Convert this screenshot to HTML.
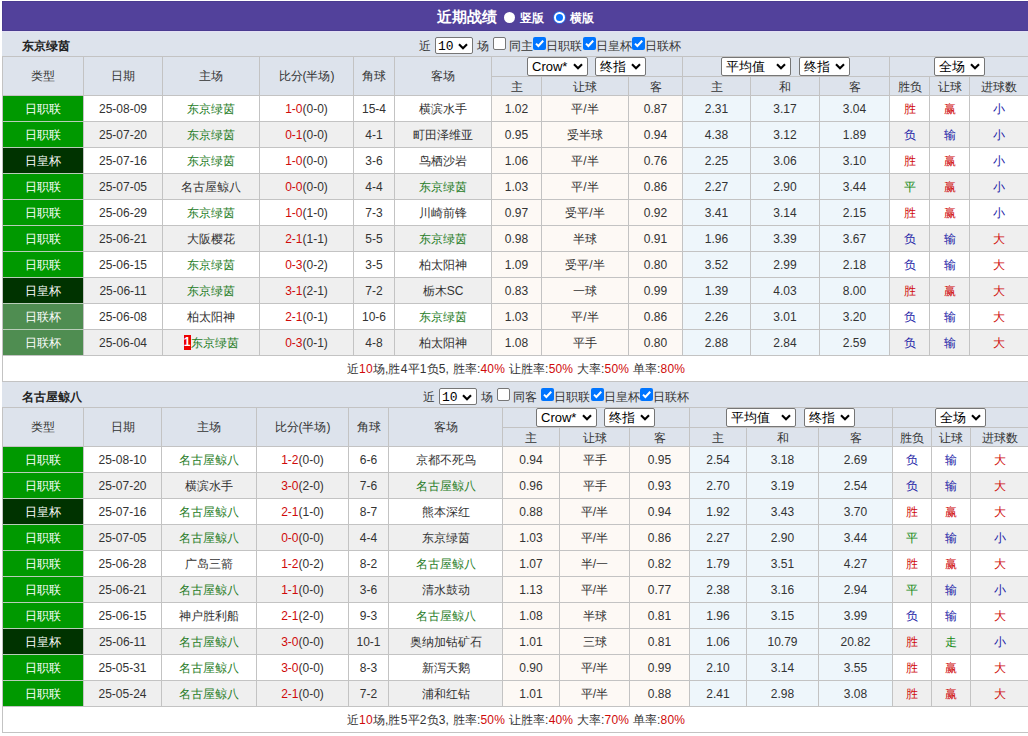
<!DOCTYPE html>
<html><head><meta charset="utf-8"><style>
html,body{margin:0;padding:0;background:#fff;width:1028px;height:736px;overflow:hidden;position:relative}
body div{position:absolute}
body{font-family:"Liberation Sans", sans-serif;font-size:12px;color:#333}
.t{white-space:nowrap}
.sel{background:#fff;border:1px solid #767676;border-radius:2px;color:#000}
.cb{width:11px;height:11px;border:1px solid #767676;border-radius:2px;background:#fff}
.cb.on{width:13px;height:13px;border:0;background:#0075ff}
.rk{display:inline-block;background:#e00;color:#fff;font-weight:bold;width:7px;line-height:14px;height:15px;text-align:center;vertical-align:middle;margin-top:-2px}
</style></head><body>
<div style="left:2px;top:1px;width:1030px;height:30px;background:#52419b;box-sizing:border-box;border:1px solid #4a3c90;"></div><div class="t" style="left:437px;top:8px;height:18px;line-height:18px;font-size:15px;font-weight:bold;color:#fff">近期战绩</div><div style="left:503.5px;top:12px;width:11px;height:11px;border-radius:50%;background:#fff"></div><div class="t" style="left:520px;top:10px;height:16px;line-height:16px;color:#fff;font-size:12px;font-weight:bold">竖版</div><div style="left:553px;top:11px;width:13px;height:13px;border-radius:50%;background:#2a6ee8"><div style="position:absolute;left:1px;top:1px;width:11px;height:11px;border-radius:50%;background:#0a74ff;box-sizing:border-box;border:2px solid #fff"></div></div><div class="t" style="left:570px;top:10px;height:16px;line-height:16px;color:#fff;font-size:12px;font-weight:bold">横版</div><div style="left:2px;top:31px;width:1030px;height:25px;background:#dde3ec;"></div><div style="left:2px;top:31px;width:1030px;height:1px;background:#e4e0f4;"></div><div class="t" style="left:22px;top:39px;height:14px;line-height:14px;font-weight:bold;color:#222">东京绿茵</div><div class="t" style="left:419px;top:38px;height:16px;line-height:16px;color:#333">近</div><div class="sel" style="left:435px;top:37px;width:36px;height:15px;"><span style="position:absolute;left:2px;top:0;line-height:15px;font-size:13px"><span style="font-family:Liberation Mono">10</span></span><svg width="10" height="7" viewBox="0 0 10 7" style="position:absolute;right:4px;top:5px"><path d="M1 1.2 L5 5.2 L9 1.2" fill="none" stroke="#000" stroke-width="2.1"/></svg></div><div class="t" style="left:477px;top:38px;height:16px;line-height:16px;color:#333">场</div><div class="cb" style="left:493px;top:37px"></div><div class="t" style="left:509px;top:38px;height:16px;line-height:16px;color:#333">同主</div><div class="cb on" style="left:533px;top:37px"><svg width="13" height="13" viewBox="0 0 13 13" style="position:absolute;left:0;top:0"><path d="M3 6.6 L5.4 9 L10.2 3.8" fill="none" stroke="#fff" stroke-width="2"/></svg></div><div class="t" style="left:546px;top:38px;height:16px;line-height:16px;color:#333">日职联</div><div class="cb on" style="left:582.5px;top:37px"><svg width="13" height="13" viewBox="0 0 13 13" style="position:absolute;left:0;top:0"><path d="M3 6.6 L5.4 9 L10.2 3.8" fill="none" stroke="#fff" stroke-width="2"/></svg></div><div class="t" style="left:595.5px;top:38px;height:16px;line-height:16px;color:#333">日皇杯</div><div class="cb on" style="left:632.0px;top:37px"><svg width="13" height="13" viewBox="0 0 13 13" style="position:absolute;left:0;top:0"><path d="M3 6.6 L5.4 9 L10.2 3.8" fill="none" stroke="#fff" stroke-width="2"/></svg></div><div class="t" style="left:645.0px;top:38px;height:16px;line-height:16px;color:#333">日联杯</div><div style="left:2px;top:56px;width:1030px;height:39px;background:#dde3ec;"></div><div style="left:2px;top:96px;width:1030px;height:25px;background:#ffffff;"></div><div style="left:492px;top:96px;width:190px;height:25px;background:#fdf9f5;"></div><div style="left:683px;top:96px;width:206px;height:25px;background:#eef6fb;"></div><div style="left:2px;top:122px;width:1030px;height:25px;background:#efefef;"></div><div style="left:492px;top:122px;width:190px;height:25px;background:#fdf9f5;"></div><div style="left:683px;top:122px;width:206px;height:25px;background:#eef6fb;"></div><div style="left:2px;top:148px;width:1030px;height:25px;background:#ffffff;"></div><div style="left:492px;top:148px;width:190px;height:25px;background:#fdf9f5;"></div><div style="left:683px;top:148px;width:206px;height:25px;background:#eef6fb;"></div><div style="left:2px;top:174px;width:1030px;height:25px;background:#efefef;"></div><div style="left:492px;top:174px;width:190px;height:25px;background:#fdf9f5;"></div><div style="left:683px;top:174px;width:206px;height:25px;background:#eef6fb;"></div><div style="left:2px;top:200px;width:1030px;height:25px;background:#ffffff;"></div><div style="left:492px;top:200px;width:190px;height:25px;background:#fdf9f5;"></div><div style="left:683px;top:200px;width:206px;height:25px;background:#eef6fb;"></div><div style="left:2px;top:226px;width:1030px;height:25px;background:#efefef;"></div><div style="left:492px;top:226px;width:190px;height:25px;background:#fdf9f5;"></div><div style="left:683px;top:226px;width:206px;height:25px;background:#eef6fb;"></div><div style="left:2px;top:252px;width:1030px;height:25px;background:#ffffff;"></div><div style="left:492px;top:252px;width:190px;height:25px;background:#fdf9f5;"></div><div style="left:683px;top:252px;width:206px;height:25px;background:#eef6fb;"></div><div style="left:2px;top:278px;width:1030px;height:25px;background:#efefef;"></div><div style="left:492px;top:278px;width:190px;height:25px;background:#fdf9f5;"></div><div style="left:683px;top:278px;width:206px;height:25px;background:#eef6fb;"></div><div style="left:2px;top:304px;width:1030px;height:25px;background:#ffffff;"></div><div style="left:492px;top:304px;width:190px;height:25px;background:#fdf9f5;"></div><div style="left:683px;top:304px;width:206px;height:25px;background:#eef6fb;"></div><div style="left:2px;top:330px;width:1030px;height:25px;background:#efefef;"></div><div style="left:492px;top:330px;width:190px;height:25px;background:#fdf9f5;"></div><div style="left:683px;top:330px;width:206px;height:25px;background:#eef6fb;"></div><div style="left:2px;top:356px;width:1030px;height:25px;background:#fff;"></div><div style="left:2px;top:56px;width:1028px;height:1px;background:#c3c3c3;"></div><div style="left:491px;top:76px;width:539px;height:1px;background:#c3c3c3;"></div><div style="left:2px;top:95px;width:1028px;height:1px;background:#c3c3c3;"></div><div style="left:2px;top:121px;width:1028px;height:1px;background:#c3c3c3;"></div><div style="left:2px;top:147px;width:1028px;height:1px;background:#c3c3c3;"></div><div style="left:2px;top:173px;width:1028px;height:1px;background:#c3c3c3;"></div><div style="left:2px;top:199px;width:1028px;height:1px;background:#c3c3c3;"></div><div style="left:2px;top:225px;width:1028px;height:1px;background:#c3c3c3;"></div><div style="left:2px;top:251px;width:1028px;height:1px;background:#c3c3c3;"></div><div style="left:2px;top:277px;width:1028px;height:1px;background:#c3c3c3;"></div><div style="left:2px;top:303px;width:1028px;height:1px;background:#c3c3c3;"></div><div style="left:2px;top:329px;width:1028px;height:1px;background:#c3c3c3;"></div><div style="left:2px;top:355px;width:1028px;height:1px;background:#c3c3c3;"></div><div style="left:2px;top:381px;width:1028px;height:1px;background:#c3c3c3;"></div><div style="left:2px;top:56px;width:1px;height:326px;background:#c3c3c3;"></div><div style="left:83px;top:56px;width:1px;height:299px;background:#c3c3c3;"></div><div style="left:162px;top:56px;width:1px;height:299px;background:#c3c3c3;"></div><div style="left:259px;top:56px;width:1px;height:299px;background:#c3c3c3;"></div><div style="left:353px;top:56px;width:1px;height:299px;background:#c3c3c3;"></div><div style="left:394px;top:56px;width:1px;height:299px;background:#c3c3c3;"></div><div style="left:491px;top:56px;width:1px;height:299px;background:#c3c3c3;"></div><div style="left:541px;top:76px;width:1px;height:279px;background:#c3c3c3;"></div><div style="left:628px;top:76px;width:1px;height:279px;background:#c3c3c3;"></div><div style="left:682px;top:56px;width:1px;height:299px;background:#c3c3c3;"></div><div style="left:750px;top:76px;width:1px;height:279px;background:#c3c3c3;"></div><div style="left:819px;top:76px;width:1px;height:279px;background:#c3c3c3;"></div><div style="left:889px;top:56px;width:1px;height:299px;background:#c3c3c3;"></div><div style="left:929px;top:76px;width:1px;height:279px;background:#c3c3c3;"></div><div style="left:969px;top:76px;width:1px;height:279px;background:#c3c3c3;"></div><div style="left:1028px;top:56px;width:1px;height:299px;background:#c3c3c3;"></div><div class="t" style="left:3px;top:57px;width:80px;height:38px;line-height:38px;text-align:center;color:#333">类型</div><div class="t" style="left:84px;top:57px;width:78px;height:38px;line-height:38px;text-align:center;color:#333">日期</div><div class="t" style="left:163px;top:57px;width:96px;height:38px;line-height:38px;text-align:center;color:#333">主场</div><div class="t" style="left:260px;top:57px;width:93px;height:38px;line-height:38px;text-align:center;color:#333">比分(半场)</div><div class="t" style="left:354px;top:57px;width:40px;height:38px;line-height:38px;text-align:center;color:#333">角球</div><div class="t" style="left:395px;top:57px;width:96px;height:38px;line-height:38px;text-align:center;color:#333">客场</div><div class="t" style="left:492px;top:78px;width:49px;height:18px;line-height:18px;text-align:center;color:#333">主</div><div class="t" style="left:542px;top:78px;width:86px;height:18px;line-height:18px;text-align:center;color:#333">让球</div><div class="t" style="left:629px;top:78px;width:53px;height:18px;line-height:18px;text-align:center;color:#333">客</div><div class="t" style="left:683px;top:78px;width:67px;height:18px;line-height:18px;text-align:center;color:#333">主</div><div class="t" style="left:751px;top:78px;width:68px;height:18px;line-height:18px;text-align:center;color:#333">和</div><div class="t" style="left:820px;top:78px;width:69px;height:18px;line-height:18px;text-align:center;color:#333">客</div><div class="t" style="left:890px;top:78px;width:39px;height:18px;line-height:18px;text-align:center;color:#333">胜负</div><div class="t" style="left:930px;top:78px;width:39px;height:18px;line-height:18px;text-align:center;color:#333">让球</div><div class="t" style="left:970px;top:78px;width:58px;height:18px;line-height:18px;text-align:center;color:#333">进球数</div><div class="sel" style="left:527px;top:57px;width:59px;height:17px;"><span style="position:absolute;left:4px;top:0;line-height:17px;font-size:13px">Crow*</span><svg width="10" height="7" viewBox="0 0 10 7" style="position:absolute;right:4px;top:5px"><path d="M1 1.2 L5 5.2 L9 1.2" fill="none" stroke="#000" stroke-width="2.1"/></svg></div><div class="sel" style="left:595px;top:57px;width:49px;height:17px;"><span style="position:absolute;left:4px;top:0;line-height:17px;font-size:13px">终指</span><svg width="10" height="7" viewBox="0 0 10 7" style="position:absolute;right:4px;top:5px"><path d="M1 1.2 L5 5.2 L9 1.2" fill="none" stroke="#000" stroke-width="2.1"/></svg></div><div class="sel" style="left:721px;top:57px;width:68px;height:17px;"><span style="position:absolute;left:4px;top:0;line-height:17px;font-size:13px">平均值</span><svg width="10" height="7" viewBox="0 0 10 7" style="position:absolute;right:4px;top:5px"><path d="M1 1.2 L5 5.2 L9 1.2" fill="none" stroke="#000" stroke-width="2.1"/></svg></div><div class="sel" style="left:799px;top:57px;width:49px;height:17px;"><span style="position:absolute;left:4px;top:0;line-height:17px;font-size:13px">终指</span><svg width="10" height="7" viewBox="0 0 10 7" style="position:absolute;right:4px;top:5px"><path d="M1 1.2 L5 5.2 L9 1.2" fill="none" stroke="#000" stroke-width="2.1"/></svg></div><div class="sel" style="left:934px;top:57px;width:49px;height:17px;"><span style="position:absolute;left:4px;top:0;line-height:17px;font-size:13px">全场</span><svg width="10" height="7" viewBox="0 0 10 7" style="position:absolute;right:4px;top:5px"><path d="M1 1.2 L5 5.2 L9 1.2" fill="none" stroke="#000" stroke-width="2.1"/></svg></div><div style="left:3px;top:96px;width:80px;height:25px;background:#009900;"></div><div class="t" style="left:3px;top:97px;width:80px;height:25px;line-height:25px;text-align:center;color:#fff">日职联</div><div class="t" style="left:84px;top:97px;width:78px;height:25px;line-height:25px;text-align:center;color:#333">25-08-09</div><div class="t" style="left:163px;top:97px;width:96px;height:25px;line-height:25px;text-align:center;color:#333"><span style="color:#267c26">东京绿茵</span></div><div class="t" style="left:260px;top:97px;width:93px;height:25px;line-height:25px;text-align:center;color:#333"><span style="color:#cf0a0a">1-0</span>(0-0)</div><div class="t" style="left:354px;top:97px;width:40px;height:25px;line-height:25px;text-align:center;color:#333">15-4</div><div class="t" style="left:395px;top:97px;width:96px;height:25px;line-height:25px;text-align:center;color:#333">横滨水手</div><div class="t" style="left:492px;top:97px;width:49px;height:25px;line-height:25px;text-align:center;color:#333">1.02</div><div class="t" style="left:542px;top:97px;width:86px;height:25px;line-height:25px;text-align:center;color:#333">平/半</div><div class="t" style="left:629px;top:97px;width:53px;height:25px;line-height:25px;text-align:center;color:#333">0.87</div><div class="t" style="left:683px;top:97px;width:67px;height:25px;line-height:25px;text-align:center;color:#333">2.31</div><div class="t" style="left:751px;top:97px;width:68px;height:25px;line-height:25px;text-align:center;color:#333">3.17</div><div class="t" style="left:820px;top:97px;width:69px;height:25px;line-height:25px;text-align:center;color:#333">3.04</div><div class="t" style="left:890px;top:97px;width:39px;height:25px;line-height:25px;text-align:center;color:#333"><span style="color:#cf0a0a">胜</span></div><div class="t" style="left:930px;top:97px;width:39px;height:25px;line-height:25px;text-align:center;color:#333"><span style="color:#cf0a0a">赢</span></div><div class="t" style="left:970px;top:97px;width:58px;height:25px;line-height:25px;text-align:center;color:#333"><span style="color:#1a1aa6">小</span></div><div style="left:3px;top:121px;width:80px;height:26px;background:#009900;"></div><div style="left:3px;top:121px;width:80px;height:1px;background:#b9cdb9;"></div><div class="t" style="left:3px;top:123px;width:80px;height:25px;line-height:25px;text-align:center;color:#fff">日职联</div><div class="t" style="left:84px;top:123px;width:78px;height:25px;line-height:25px;text-align:center;color:#333">25-07-20</div><div class="t" style="left:163px;top:123px;width:96px;height:25px;line-height:25px;text-align:center;color:#333"><span style="color:#267c26">东京绿茵</span></div><div class="t" style="left:260px;top:123px;width:93px;height:25px;line-height:25px;text-align:center;color:#333"><span style="color:#cf0a0a">0-1</span>(0-0)</div><div class="t" style="left:354px;top:123px;width:40px;height:25px;line-height:25px;text-align:center;color:#333">4-1</div><div class="t" style="left:395px;top:123px;width:96px;height:25px;line-height:25px;text-align:center;color:#333">町田泽维亚</div><div class="t" style="left:492px;top:123px;width:49px;height:25px;line-height:25px;text-align:center;color:#333">0.95</div><div class="t" style="left:542px;top:123px;width:86px;height:25px;line-height:25px;text-align:center;color:#333">受半球</div><div class="t" style="left:629px;top:123px;width:53px;height:25px;line-height:25px;text-align:center;color:#333">0.94</div><div class="t" style="left:683px;top:123px;width:67px;height:25px;line-height:25px;text-align:center;color:#333">4.38</div><div class="t" style="left:751px;top:123px;width:68px;height:25px;line-height:25px;text-align:center;color:#333">3.12</div><div class="t" style="left:820px;top:123px;width:69px;height:25px;line-height:25px;text-align:center;color:#333">1.89</div><div class="t" style="left:890px;top:123px;width:39px;height:25px;line-height:25px;text-align:center;color:#333"><span style="color:#1a1aa6">负</span></div><div class="t" style="left:930px;top:123px;width:39px;height:25px;line-height:25px;text-align:center;color:#333"><span style="color:#1a1aa6">输</span></div><div class="t" style="left:970px;top:123px;width:58px;height:25px;line-height:25px;text-align:center;color:#333"><span style="color:#1a1aa6">小</span></div><div style="left:3px;top:147px;width:80px;height:26px;background:#003300;"></div><div style="left:3px;top:147px;width:80px;height:1px;background:#b9cdb9;"></div><div class="t" style="left:3px;top:149px;width:80px;height:25px;line-height:25px;text-align:center;color:#fff">日皇杯</div><div class="t" style="left:84px;top:149px;width:78px;height:25px;line-height:25px;text-align:center;color:#333">25-07-16</div><div class="t" style="left:163px;top:149px;width:96px;height:25px;line-height:25px;text-align:center;color:#333"><span style="color:#267c26">东京绿茵</span></div><div class="t" style="left:260px;top:149px;width:93px;height:25px;line-height:25px;text-align:center;color:#333"><span style="color:#cf0a0a">1-0</span>(0-0)</div><div class="t" style="left:354px;top:149px;width:40px;height:25px;line-height:25px;text-align:center;color:#333">3-6</div><div class="t" style="left:395px;top:149px;width:96px;height:25px;line-height:25px;text-align:center;color:#333">鸟栖沙岩</div><div class="t" style="left:492px;top:149px;width:49px;height:25px;line-height:25px;text-align:center;color:#333">1.06</div><div class="t" style="left:542px;top:149px;width:86px;height:25px;line-height:25px;text-align:center;color:#333">平/半</div><div class="t" style="left:629px;top:149px;width:53px;height:25px;line-height:25px;text-align:center;color:#333">0.76</div><div class="t" style="left:683px;top:149px;width:67px;height:25px;line-height:25px;text-align:center;color:#333">2.25</div><div class="t" style="left:751px;top:149px;width:68px;height:25px;line-height:25px;text-align:center;color:#333">3.06</div><div class="t" style="left:820px;top:149px;width:69px;height:25px;line-height:25px;text-align:center;color:#333">3.10</div><div class="t" style="left:890px;top:149px;width:39px;height:25px;line-height:25px;text-align:center;color:#333"><span style="color:#cf0a0a">胜</span></div><div class="t" style="left:930px;top:149px;width:39px;height:25px;line-height:25px;text-align:center;color:#333"><span style="color:#cf0a0a">赢</span></div><div class="t" style="left:970px;top:149px;width:58px;height:25px;line-height:25px;text-align:center;color:#333"><span style="color:#1a1aa6">小</span></div><div style="left:3px;top:173px;width:80px;height:26px;background:#009900;"></div><div style="left:3px;top:173px;width:80px;height:1px;background:#b9cdb9;"></div><div class="t" style="left:3px;top:175px;width:80px;height:25px;line-height:25px;text-align:center;color:#fff">日职联</div><div class="t" style="left:84px;top:175px;width:78px;height:25px;line-height:25px;text-align:center;color:#333">25-07-05</div><div class="t" style="left:163px;top:175px;width:96px;height:25px;line-height:25px;text-align:center;color:#333">名古屋鲸八</div><div class="t" style="left:260px;top:175px;width:93px;height:25px;line-height:25px;text-align:center;color:#333"><span style="color:#cf0a0a">0-0</span>(0-0)</div><div class="t" style="left:354px;top:175px;width:40px;height:25px;line-height:25px;text-align:center;color:#333">4-4</div><div class="t" style="left:395px;top:175px;width:96px;height:25px;line-height:25px;text-align:center;color:#333"><span style="color:#267c26">东京绿茵</span></div><div class="t" style="left:492px;top:175px;width:49px;height:25px;line-height:25px;text-align:center;color:#333">1.03</div><div class="t" style="left:542px;top:175px;width:86px;height:25px;line-height:25px;text-align:center;color:#333">平/半</div><div class="t" style="left:629px;top:175px;width:53px;height:25px;line-height:25px;text-align:center;color:#333">0.86</div><div class="t" style="left:683px;top:175px;width:67px;height:25px;line-height:25px;text-align:center;color:#333">2.27</div><div class="t" style="left:751px;top:175px;width:68px;height:25px;line-height:25px;text-align:center;color:#333">2.90</div><div class="t" style="left:820px;top:175px;width:69px;height:25px;line-height:25px;text-align:center;color:#333">3.44</div><div class="t" style="left:890px;top:175px;width:39px;height:25px;line-height:25px;text-align:center;color:#333"><span style="color:#118811">平</span></div><div class="t" style="left:930px;top:175px;width:39px;height:25px;line-height:25px;text-align:center;color:#333"><span style="color:#cf0a0a">赢</span></div><div class="t" style="left:970px;top:175px;width:58px;height:25px;line-height:25px;text-align:center;color:#333"><span style="color:#1a1aa6">小</span></div><div style="left:3px;top:199px;width:80px;height:26px;background:#009900;"></div><div style="left:3px;top:199px;width:80px;height:1px;background:#b9cdb9;"></div><div class="t" style="left:3px;top:201px;width:80px;height:25px;line-height:25px;text-align:center;color:#fff">日职联</div><div class="t" style="left:84px;top:201px;width:78px;height:25px;line-height:25px;text-align:center;color:#333">25-06-29</div><div class="t" style="left:163px;top:201px;width:96px;height:25px;line-height:25px;text-align:center;color:#333"><span style="color:#267c26">东京绿茵</span></div><div class="t" style="left:260px;top:201px;width:93px;height:25px;line-height:25px;text-align:center;color:#333"><span style="color:#cf0a0a">1-0</span>(1-0)</div><div class="t" style="left:354px;top:201px;width:40px;height:25px;line-height:25px;text-align:center;color:#333">7-3</div><div class="t" style="left:395px;top:201px;width:96px;height:25px;line-height:25px;text-align:center;color:#333">川崎前锋</div><div class="t" style="left:492px;top:201px;width:49px;height:25px;line-height:25px;text-align:center;color:#333">0.97</div><div class="t" style="left:542px;top:201px;width:86px;height:25px;line-height:25px;text-align:center;color:#333">受平/半</div><div class="t" style="left:629px;top:201px;width:53px;height:25px;line-height:25px;text-align:center;color:#333">0.92</div><div class="t" style="left:683px;top:201px;width:67px;height:25px;line-height:25px;text-align:center;color:#333">3.41</div><div class="t" style="left:751px;top:201px;width:68px;height:25px;line-height:25px;text-align:center;color:#333">3.14</div><div class="t" style="left:820px;top:201px;width:69px;height:25px;line-height:25px;text-align:center;color:#333">2.15</div><div class="t" style="left:890px;top:201px;width:39px;height:25px;line-height:25px;text-align:center;color:#333"><span style="color:#cf0a0a">胜</span></div><div class="t" style="left:930px;top:201px;width:39px;height:25px;line-height:25px;text-align:center;color:#333"><span style="color:#cf0a0a">赢</span></div><div class="t" style="left:970px;top:201px;width:58px;height:25px;line-height:25px;text-align:center;color:#333"><span style="color:#1a1aa6">小</span></div><div style="left:3px;top:225px;width:80px;height:26px;background:#009900;"></div><div style="left:3px;top:225px;width:80px;height:1px;background:#b9cdb9;"></div><div class="t" style="left:3px;top:227px;width:80px;height:25px;line-height:25px;text-align:center;color:#fff">日职联</div><div class="t" style="left:84px;top:227px;width:78px;height:25px;line-height:25px;text-align:center;color:#333">25-06-21</div><div class="t" style="left:163px;top:227px;width:96px;height:25px;line-height:25px;text-align:center;color:#333">大阪樱花</div><div class="t" style="left:260px;top:227px;width:93px;height:25px;line-height:25px;text-align:center;color:#333"><span style="color:#cf0a0a">2-1</span>(1-1)</div><div class="t" style="left:354px;top:227px;width:40px;height:25px;line-height:25px;text-align:center;color:#333">5-5</div><div class="t" style="left:395px;top:227px;width:96px;height:25px;line-height:25px;text-align:center;color:#333"><span style="color:#267c26">东京绿茵</span></div><div class="t" style="left:492px;top:227px;width:49px;height:25px;line-height:25px;text-align:center;color:#333">0.98</div><div class="t" style="left:542px;top:227px;width:86px;height:25px;line-height:25px;text-align:center;color:#333">半球</div><div class="t" style="left:629px;top:227px;width:53px;height:25px;line-height:25px;text-align:center;color:#333">0.91</div><div class="t" style="left:683px;top:227px;width:67px;height:25px;line-height:25px;text-align:center;color:#333">1.96</div><div class="t" style="left:751px;top:227px;width:68px;height:25px;line-height:25px;text-align:center;color:#333">3.39</div><div class="t" style="left:820px;top:227px;width:69px;height:25px;line-height:25px;text-align:center;color:#333">3.67</div><div class="t" style="left:890px;top:227px;width:39px;height:25px;line-height:25px;text-align:center;color:#333"><span style="color:#1a1aa6">负</span></div><div class="t" style="left:930px;top:227px;width:39px;height:25px;line-height:25px;text-align:center;color:#333"><span style="color:#1a1aa6">输</span></div><div class="t" style="left:970px;top:227px;width:58px;height:25px;line-height:25px;text-align:center;color:#333"><span style="color:#cf0a0a">大</span></div><div style="left:3px;top:251px;width:80px;height:26px;background:#009900;"></div><div style="left:3px;top:251px;width:80px;height:1px;background:#b9cdb9;"></div><div class="t" style="left:3px;top:253px;width:80px;height:25px;line-height:25px;text-align:center;color:#fff">日职联</div><div class="t" style="left:84px;top:253px;width:78px;height:25px;line-height:25px;text-align:center;color:#333">25-06-15</div><div class="t" style="left:163px;top:253px;width:96px;height:25px;line-height:25px;text-align:center;color:#333"><span style="color:#267c26">东京绿茵</span></div><div class="t" style="left:260px;top:253px;width:93px;height:25px;line-height:25px;text-align:center;color:#333"><span style="color:#cf0a0a">0-3</span>(0-2)</div><div class="t" style="left:354px;top:253px;width:40px;height:25px;line-height:25px;text-align:center;color:#333">3-5</div><div class="t" style="left:395px;top:253px;width:96px;height:25px;line-height:25px;text-align:center;color:#333">柏太阳神</div><div class="t" style="left:492px;top:253px;width:49px;height:25px;line-height:25px;text-align:center;color:#333">1.09</div><div class="t" style="left:542px;top:253px;width:86px;height:25px;line-height:25px;text-align:center;color:#333">受平/半</div><div class="t" style="left:629px;top:253px;width:53px;height:25px;line-height:25px;text-align:center;color:#333">0.80</div><div class="t" style="left:683px;top:253px;width:67px;height:25px;line-height:25px;text-align:center;color:#333">3.52</div><div class="t" style="left:751px;top:253px;width:68px;height:25px;line-height:25px;text-align:center;color:#333">2.99</div><div class="t" style="left:820px;top:253px;width:69px;height:25px;line-height:25px;text-align:center;color:#333">2.18</div><div class="t" style="left:890px;top:253px;width:39px;height:25px;line-height:25px;text-align:center;color:#333"><span style="color:#1a1aa6">负</span></div><div class="t" style="left:930px;top:253px;width:39px;height:25px;line-height:25px;text-align:center;color:#333"><span style="color:#1a1aa6">输</span></div><div class="t" style="left:970px;top:253px;width:58px;height:25px;line-height:25px;text-align:center;color:#333"><span style="color:#cf0a0a">大</span></div><div style="left:3px;top:277px;width:80px;height:26px;background:#003300;"></div><div style="left:3px;top:277px;width:80px;height:1px;background:#b9cdb9;"></div><div class="t" style="left:3px;top:279px;width:80px;height:25px;line-height:25px;text-align:center;color:#fff">日皇杯</div><div class="t" style="left:84px;top:279px;width:78px;height:25px;line-height:25px;text-align:center;color:#333">25-06-11</div><div class="t" style="left:163px;top:279px;width:96px;height:25px;line-height:25px;text-align:center;color:#333"><span style="color:#267c26">东京绿茵</span></div><div class="t" style="left:260px;top:279px;width:93px;height:25px;line-height:25px;text-align:center;color:#333"><span style="color:#cf0a0a">3-1</span>(2-1)</div><div class="t" style="left:354px;top:279px;width:40px;height:25px;line-height:25px;text-align:center;color:#333">7-2</div><div class="t" style="left:395px;top:279px;width:96px;height:25px;line-height:25px;text-align:center;color:#333">栃木SC</div><div class="t" style="left:492px;top:279px;width:49px;height:25px;line-height:25px;text-align:center;color:#333">0.83</div><div class="t" style="left:542px;top:279px;width:86px;height:25px;line-height:25px;text-align:center;color:#333">一球</div><div class="t" style="left:629px;top:279px;width:53px;height:25px;line-height:25px;text-align:center;color:#333">0.99</div><div class="t" style="left:683px;top:279px;width:67px;height:25px;line-height:25px;text-align:center;color:#333">1.39</div><div class="t" style="left:751px;top:279px;width:68px;height:25px;line-height:25px;text-align:center;color:#333">4.03</div><div class="t" style="left:820px;top:279px;width:69px;height:25px;line-height:25px;text-align:center;color:#333">8.00</div><div class="t" style="left:890px;top:279px;width:39px;height:25px;line-height:25px;text-align:center;color:#333"><span style="color:#cf0a0a">胜</span></div><div class="t" style="left:930px;top:279px;width:39px;height:25px;line-height:25px;text-align:center;color:#333"><span style="color:#cf0a0a">赢</span></div><div class="t" style="left:970px;top:279px;width:58px;height:25px;line-height:25px;text-align:center;color:#333"><span style="color:#cf0a0a">大</span></div><div style="left:3px;top:303px;width:80px;height:26px;background:#4f8d51;"></div><div style="left:3px;top:303px;width:80px;height:1px;background:#b9cdb9;"></div><div class="t" style="left:3px;top:305px;width:80px;height:25px;line-height:25px;text-align:center;color:#fff">日联杯</div><div class="t" style="left:84px;top:305px;width:78px;height:25px;line-height:25px;text-align:center;color:#333">25-06-08</div><div class="t" style="left:163px;top:305px;width:96px;height:25px;line-height:25px;text-align:center;color:#333">柏太阳神</div><div class="t" style="left:260px;top:305px;width:93px;height:25px;line-height:25px;text-align:center;color:#333"><span style="color:#cf0a0a">2-1</span>(0-1)</div><div class="t" style="left:354px;top:305px;width:40px;height:25px;line-height:25px;text-align:center;color:#333">10-6</div><div class="t" style="left:395px;top:305px;width:96px;height:25px;line-height:25px;text-align:center;color:#333"><span style="color:#267c26">东京绿茵</span></div><div class="t" style="left:492px;top:305px;width:49px;height:25px;line-height:25px;text-align:center;color:#333">1.03</div><div class="t" style="left:542px;top:305px;width:86px;height:25px;line-height:25px;text-align:center;color:#333">平/半</div><div class="t" style="left:629px;top:305px;width:53px;height:25px;line-height:25px;text-align:center;color:#333">0.86</div><div class="t" style="left:683px;top:305px;width:67px;height:25px;line-height:25px;text-align:center;color:#333">2.26</div><div class="t" style="left:751px;top:305px;width:68px;height:25px;line-height:25px;text-align:center;color:#333">3.01</div><div class="t" style="left:820px;top:305px;width:69px;height:25px;line-height:25px;text-align:center;color:#333">3.20</div><div class="t" style="left:890px;top:305px;width:39px;height:25px;line-height:25px;text-align:center;color:#333"><span style="color:#1a1aa6">负</span></div><div class="t" style="left:930px;top:305px;width:39px;height:25px;line-height:25px;text-align:center;color:#333"><span style="color:#1a1aa6">输</span></div><div class="t" style="left:970px;top:305px;width:58px;height:25px;line-height:25px;text-align:center;color:#333"><span style="color:#cf0a0a">大</span></div><div style="left:3px;top:329px;width:80px;height:26px;background:#4f8d51;"></div><div style="left:3px;top:329px;width:80px;height:1px;background:#b9cdb9;"></div><div class="t" style="left:3px;top:331px;width:80px;height:25px;line-height:25px;text-align:center;color:#fff">日联杯</div><div class="t" style="left:84px;top:331px;width:78px;height:25px;line-height:25px;text-align:center;color:#333">25-06-04</div><div class="t" style="left:163px;top:331px;width:96px;height:25px;line-height:25px;text-align:center;color:#333"><span class="rk">1</span><span style="color:#267c26">东京绿茵</span></div><div class="t" style="left:260px;top:331px;width:93px;height:25px;line-height:25px;text-align:center;color:#333"><span style="color:#cf0a0a">0-3</span>(0-1)</div><div class="t" style="left:354px;top:331px;width:40px;height:25px;line-height:25px;text-align:center;color:#333">4-8</div><div class="t" style="left:395px;top:331px;width:96px;height:25px;line-height:25px;text-align:center;color:#333">柏太阳神</div><div class="t" style="left:492px;top:331px;width:49px;height:25px;line-height:25px;text-align:center;color:#333">1.08</div><div class="t" style="left:542px;top:331px;width:86px;height:25px;line-height:25px;text-align:center;color:#333">平手</div><div class="t" style="left:629px;top:331px;width:53px;height:25px;line-height:25px;text-align:center;color:#333">0.80</div><div class="t" style="left:683px;top:331px;width:67px;height:25px;line-height:25px;text-align:center;color:#333">2.88</div><div class="t" style="left:751px;top:331px;width:68px;height:25px;line-height:25px;text-align:center;color:#333">2.84</div><div class="t" style="left:820px;top:331px;width:69px;height:25px;line-height:25px;text-align:center;color:#333">2.59</div><div class="t" style="left:890px;top:331px;width:39px;height:25px;line-height:25px;text-align:center;color:#333"><span style="color:#1a1aa6">负</span></div><div class="t" style="left:930px;top:331px;width:39px;height:25px;line-height:25px;text-align:center;color:#333"><span style="color:#1a1aa6">输</span></div><div class="t" style="left:970px;top:331px;width:58px;height:25px;line-height:25px;text-align:center;color:#333"><span style="color:#cf0a0a">大</span></div><div class="t" style="left:2px;top:357px;width:1028px;height:25px;line-height:25px;text-align:center;color:#333;letter-spacing:0.18px">近<span style="color:#cf0a0a">10</span>场,胜4平1负5, 胜率:<span style="color:#cf0a0a">40%</span> 让胜率:<span style="color:#cf0a0a">50%</span> 大率:<span style="color:#cf0a0a">50%</span> 单率:<span style="color:#cf0a0a">80%</span></div><div style="left:2px;top:382px;width:1030px;height:25px;background:#dde3ec;"></div><div class="t" style="left:22px;top:390px;height:14px;line-height:14px;font-weight:bold;color:#222">名古屋鲸八</div><div class="t" style="left:423px;top:389px;height:16px;line-height:16px;color:#333">近</div><div class="sel" style="left:439px;top:388px;width:36px;height:15px;"><span style="position:absolute;left:2px;top:0;line-height:15px;font-size:13px"><span style="font-family:Liberation Mono">10</span></span><svg width="10" height="7" viewBox="0 0 10 7" style="position:absolute;right:4px;top:5px"><path d="M1 1.2 L5 5.2 L9 1.2" fill="none" stroke="#000" stroke-width="2.1"/></svg></div><div class="t" style="left:481px;top:389px;height:16px;line-height:16px;color:#333">场</div><div class="cb" style="left:497px;top:388px"></div><div class="t" style="left:513px;top:389px;height:16px;line-height:16px;color:#333">同客</div><div class="cb on" style="left:541px;top:388px"><svg width="13" height="13" viewBox="0 0 13 13" style="position:absolute;left:0;top:0"><path d="M3 6.6 L5.4 9 L10.2 3.8" fill="none" stroke="#fff" stroke-width="2"/></svg></div><div class="t" style="left:554px;top:389px;height:16px;line-height:16px;color:#333">日职联</div><div class="cb on" style="left:590.5px;top:388px"><svg width="13" height="13" viewBox="0 0 13 13" style="position:absolute;left:0;top:0"><path d="M3 6.6 L5.4 9 L10.2 3.8" fill="none" stroke="#fff" stroke-width="2"/></svg></div><div class="t" style="left:603.5px;top:389px;height:16px;line-height:16px;color:#333">日皇杯</div><div class="cb on" style="left:640.0px;top:388px"><svg width="13" height="13" viewBox="0 0 13 13" style="position:absolute;left:0;top:0"><path d="M3 6.6 L5.4 9 L10.2 3.8" fill="none" stroke="#fff" stroke-width="2"/></svg></div><div class="t" style="left:653.0px;top:389px;height:16px;line-height:16px;color:#333">日联杯</div><div style="left:2px;top:407px;width:1030px;height:39px;background:#dde3ec;"></div><div style="left:2px;top:447px;width:1030px;height:25px;background:#ffffff;"></div><div style="left:503px;top:447px;width:186px;height:25px;background:#fdf9f5;"></div><div style="left:690px;top:447px;width:202px;height:25px;background:#eef6fb;"></div><div style="left:2px;top:473px;width:1030px;height:25px;background:#efefef;"></div><div style="left:503px;top:473px;width:186px;height:25px;background:#fdf9f5;"></div><div style="left:690px;top:473px;width:202px;height:25px;background:#eef6fb;"></div><div style="left:2px;top:499px;width:1030px;height:25px;background:#ffffff;"></div><div style="left:503px;top:499px;width:186px;height:25px;background:#fdf9f5;"></div><div style="left:690px;top:499px;width:202px;height:25px;background:#eef6fb;"></div><div style="left:2px;top:525px;width:1030px;height:25px;background:#efefef;"></div><div style="left:503px;top:525px;width:186px;height:25px;background:#fdf9f5;"></div><div style="left:690px;top:525px;width:202px;height:25px;background:#eef6fb;"></div><div style="left:2px;top:551px;width:1030px;height:25px;background:#ffffff;"></div><div style="left:503px;top:551px;width:186px;height:25px;background:#fdf9f5;"></div><div style="left:690px;top:551px;width:202px;height:25px;background:#eef6fb;"></div><div style="left:2px;top:577px;width:1030px;height:25px;background:#efefef;"></div><div style="left:503px;top:577px;width:186px;height:25px;background:#fdf9f5;"></div><div style="left:690px;top:577px;width:202px;height:25px;background:#eef6fb;"></div><div style="left:2px;top:603px;width:1030px;height:25px;background:#ffffff;"></div><div style="left:503px;top:603px;width:186px;height:25px;background:#fdf9f5;"></div><div style="left:690px;top:603px;width:202px;height:25px;background:#eef6fb;"></div><div style="left:2px;top:629px;width:1030px;height:25px;background:#efefef;"></div><div style="left:503px;top:629px;width:186px;height:25px;background:#fdf9f5;"></div><div style="left:690px;top:629px;width:202px;height:25px;background:#eef6fb;"></div><div style="left:2px;top:655px;width:1030px;height:25px;background:#ffffff;"></div><div style="left:503px;top:655px;width:186px;height:25px;background:#fdf9f5;"></div><div style="left:690px;top:655px;width:202px;height:25px;background:#eef6fb;"></div><div style="left:2px;top:681px;width:1030px;height:25px;background:#efefef;"></div><div style="left:503px;top:681px;width:186px;height:25px;background:#fdf9f5;"></div><div style="left:690px;top:681px;width:202px;height:25px;background:#eef6fb;"></div><div style="left:2px;top:707px;width:1030px;height:25px;background:#fff;"></div><div style="left:2px;top:407px;width:1028px;height:1px;background:#c3c3c3;"></div><div style="left:502px;top:427px;width:528px;height:1px;background:#c3c3c3;"></div><div style="left:2px;top:446px;width:1028px;height:1px;background:#c3c3c3;"></div><div style="left:2px;top:472px;width:1028px;height:1px;background:#c3c3c3;"></div><div style="left:2px;top:498px;width:1028px;height:1px;background:#c3c3c3;"></div><div style="left:2px;top:524px;width:1028px;height:1px;background:#c3c3c3;"></div><div style="left:2px;top:550px;width:1028px;height:1px;background:#c3c3c3;"></div><div style="left:2px;top:576px;width:1028px;height:1px;background:#c3c3c3;"></div><div style="left:2px;top:602px;width:1028px;height:1px;background:#c3c3c3;"></div><div style="left:2px;top:628px;width:1028px;height:1px;background:#c3c3c3;"></div><div style="left:2px;top:654px;width:1028px;height:1px;background:#c3c3c3;"></div><div style="left:2px;top:680px;width:1028px;height:1px;background:#c3c3c3;"></div><div style="left:2px;top:706px;width:1028px;height:1px;background:#c3c3c3;"></div><div style="left:2px;top:732px;width:1028px;height:1px;background:#c3c3c3;"></div><div style="left:2px;top:407px;width:1px;height:326px;background:#c3c3c3;"></div><div style="left:83px;top:407px;width:1px;height:299px;background:#c3c3c3;"></div><div style="left:161px;top:407px;width:1px;height:299px;background:#c3c3c3;"></div><div style="left:256px;top:407px;width:1px;height:299px;background:#c3c3c3;"></div><div style="left:348px;top:407px;width:1px;height:299px;background:#c3c3c3;"></div><div style="left:388px;top:407px;width:1px;height:299px;background:#c3c3c3;"></div><div style="left:502px;top:407px;width:1px;height:299px;background:#c3c3c3;"></div><div style="left:559px;top:427px;width:1px;height:279px;background:#c3c3c3;"></div><div style="left:629px;top:427px;width:1px;height:279px;background:#c3c3c3;"></div><div style="left:689px;top:407px;width:1px;height:299px;background:#c3c3c3;"></div><div style="left:746px;top:427px;width:1px;height:279px;background:#c3c3c3;"></div><div style="left:818px;top:427px;width:1px;height:279px;background:#c3c3c3;"></div><div style="left:892px;top:407px;width:1px;height:299px;background:#c3c3c3;"></div><div style="left:931px;top:427px;width:1px;height:279px;background:#c3c3c3;"></div><div style="left:970px;top:427px;width:1px;height:279px;background:#c3c3c3;"></div><div style="left:1028px;top:407px;width:1px;height:299px;background:#c3c3c3;"></div><div class="t" style="left:3px;top:408px;width:80px;height:38px;line-height:38px;text-align:center;color:#333">类型</div><div class="t" style="left:84px;top:408px;width:77px;height:38px;line-height:38px;text-align:center;color:#333">日期</div><div class="t" style="left:162px;top:408px;width:94px;height:38px;line-height:38px;text-align:center;color:#333">主场</div><div class="t" style="left:257px;top:408px;width:91px;height:38px;line-height:38px;text-align:center;color:#333">比分(半场)</div><div class="t" style="left:349px;top:408px;width:39px;height:38px;line-height:38px;text-align:center;color:#333">角球</div><div class="t" style="left:389px;top:408px;width:113px;height:38px;line-height:38px;text-align:center;color:#333">客场</div><div class="t" style="left:503px;top:429px;width:56px;height:18px;line-height:18px;text-align:center;color:#333">主</div><div class="t" style="left:560px;top:429px;width:69px;height:18px;line-height:18px;text-align:center;color:#333">让球</div><div class="t" style="left:630px;top:429px;width:59px;height:18px;line-height:18px;text-align:center;color:#333">客</div><div class="t" style="left:690px;top:429px;width:56px;height:18px;line-height:18px;text-align:center;color:#333">主</div><div class="t" style="left:747px;top:429px;width:71px;height:18px;line-height:18px;text-align:center;color:#333">和</div><div class="t" style="left:819px;top:429px;width:73px;height:18px;line-height:18px;text-align:center;color:#333">客</div><div class="t" style="left:893px;top:429px;width:38px;height:18px;line-height:18px;text-align:center;color:#333">胜负</div><div class="t" style="left:932px;top:429px;width:38px;height:18px;line-height:18px;text-align:center;color:#333">让球</div><div class="t" style="left:971px;top:429px;width:57px;height:18px;line-height:18px;text-align:center;color:#333">进球数</div><div class="sel" style="left:536px;top:408px;width:59px;height:17px;"><span style="position:absolute;left:4px;top:0;line-height:17px;font-size:13px">Crow*</span><svg width="10" height="7" viewBox="0 0 10 7" style="position:absolute;right:4px;top:5px"><path d="M1 1.2 L5 5.2 L9 1.2" fill="none" stroke="#000" stroke-width="2.1"/></svg></div><div class="sel" style="left:604px;top:408px;width:49px;height:17px;"><span style="position:absolute;left:4px;top:0;line-height:17px;font-size:13px">终指</span><svg width="10" height="7" viewBox="0 0 10 7" style="position:absolute;right:4px;top:5px"><path d="M1 1.2 L5 5.2 L9 1.2" fill="none" stroke="#000" stroke-width="2.1"/></svg></div><div class="sel" style="left:726px;top:408px;width:68px;height:17px;"><span style="position:absolute;left:4px;top:0;line-height:17px;font-size:13px">平均值</span><svg width="10" height="7" viewBox="0 0 10 7" style="position:absolute;right:4px;top:5px"><path d="M1 1.2 L5 5.2 L9 1.2" fill="none" stroke="#000" stroke-width="2.1"/></svg></div><div class="sel" style="left:804px;top:408px;width:49px;height:17px;"><span style="position:absolute;left:4px;top:0;line-height:17px;font-size:13px">终指</span><svg width="10" height="7" viewBox="0 0 10 7" style="position:absolute;right:4px;top:5px"><path d="M1 1.2 L5 5.2 L9 1.2" fill="none" stroke="#000" stroke-width="2.1"/></svg></div><div class="sel" style="left:935px;top:408px;width:49px;height:17px;"><span style="position:absolute;left:4px;top:0;line-height:17px;font-size:13px">全场</span><svg width="10" height="7" viewBox="0 0 10 7" style="position:absolute;right:4px;top:5px"><path d="M1 1.2 L5 5.2 L9 1.2" fill="none" stroke="#000" stroke-width="2.1"/></svg></div><div style="left:3px;top:447px;width:80px;height:25px;background:#009900;"></div><div class="t" style="left:3px;top:448px;width:80px;height:25px;line-height:25px;text-align:center;color:#fff">日职联</div><div class="t" style="left:84px;top:448px;width:77px;height:25px;line-height:25px;text-align:center;color:#333">25-08-10</div><div class="t" style="left:162px;top:448px;width:94px;height:25px;line-height:25px;text-align:center;color:#333"><span style="color:#267c26">名古屋鲸八</span></div><div class="t" style="left:257px;top:448px;width:91px;height:25px;line-height:25px;text-align:center;color:#333"><span style="color:#cf0a0a">1-2</span>(0-0)</div><div class="t" style="left:349px;top:448px;width:39px;height:25px;line-height:25px;text-align:center;color:#333">6-6</div><div class="t" style="left:389px;top:448px;width:113px;height:25px;line-height:25px;text-align:center;color:#333">京都不死鸟</div><div class="t" style="left:503px;top:448px;width:56px;height:25px;line-height:25px;text-align:center;color:#333">0.94</div><div class="t" style="left:560px;top:448px;width:69px;height:25px;line-height:25px;text-align:center;color:#333">平手</div><div class="t" style="left:630px;top:448px;width:59px;height:25px;line-height:25px;text-align:center;color:#333">0.95</div><div class="t" style="left:690px;top:448px;width:56px;height:25px;line-height:25px;text-align:center;color:#333">2.54</div><div class="t" style="left:747px;top:448px;width:71px;height:25px;line-height:25px;text-align:center;color:#333">3.18</div><div class="t" style="left:819px;top:448px;width:73px;height:25px;line-height:25px;text-align:center;color:#333">2.69</div><div class="t" style="left:893px;top:448px;width:38px;height:25px;line-height:25px;text-align:center;color:#333"><span style="color:#1a1aa6">负</span></div><div class="t" style="left:932px;top:448px;width:38px;height:25px;line-height:25px;text-align:center;color:#333"><span style="color:#1a1aa6">输</span></div><div class="t" style="left:971px;top:448px;width:57px;height:25px;line-height:25px;text-align:center;color:#333"><span style="color:#cf0a0a">大</span></div><div style="left:3px;top:472px;width:80px;height:26px;background:#009900;"></div><div style="left:3px;top:472px;width:80px;height:1px;background:#b9cdb9;"></div><div class="t" style="left:3px;top:474px;width:80px;height:25px;line-height:25px;text-align:center;color:#fff">日职联</div><div class="t" style="left:84px;top:474px;width:77px;height:25px;line-height:25px;text-align:center;color:#333">25-07-20</div><div class="t" style="left:162px;top:474px;width:94px;height:25px;line-height:25px;text-align:center;color:#333">横滨水手</div><div class="t" style="left:257px;top:474px;width:91px;height:25px;line-height:25px;text-align:center;color:#333"><span style="color:#cf0a0a">3-0</span>(2-0)</div><div class="t" style="left:349px;top:474px;width:39px;height:25px;line-height:25px;text-align:center;color:#333">7-6</div><div class="t" style="left:389px;top:474px;width:113px;height:25px;line-height:25px;text-align:center;color:#333"><span style="color:#267c26">名古屋鲸八</span></div><div class="t" style="left:503px;top:474px;width:56px;height:25px;line-height:25px;text-align:center;color:#333">0.96</div><div class="t" style="left:560px;top:474px;width:69px;height:25px;line-height:25px;text-align:center;color:#333">平手</div><div class="t" style="left:630px;top:474px;width:59px;height:25px;line-height:25px;text-align:center;color:#333">0.93</div><div class="t" style="left:690px;top:474px;width:56px;height:25px;line-height:25px;text-align:center;color:#333">2.70</div><div class="t" style="left:747px;top:474px;width:71px;height:25px;line-height:25px;text-align:center;color:#333">3.19</div><div class="t" style="left:819px;top:474px;width:73px;height:25px;line-height:25px;text-align:center;color:#333">2.54</div><div class="t" style="left:893px;top:474px;width:38px;height:25px;line-height:25px;text-align:center;color:#333"><span style="color:#1a1aa6">负</span></div><div class="t" style="left:932px;top:474px;width:38px;height:25px;line-height:25px;text-align:center;color:#333"><span style="color:#1a1aa6">输</span></div><div class="t" style="left:971px;top:474px;width:57px;height:25px;line-height:25px;text-align:center;color:#333"><span style="color:#cf0a0a">大</span></div><div style="left:3px;top:498px;width:80px;height:26px;background:#003300;"></div><div style="left:3px;top:498px;width:80px;height:1px;background:#b9cdb9;"></div><div class="t" style="left:3px;top:500px;width:80px;height:25px;line-height:25px;text-align:center;color:#fff">日皇杯</div><div class="t" style="left:84px;top:500px;width:77px;height:25px;line-height:25px;text-align:center;color:#333">25-07-16</div><div class="t" style="left:162px;top:500px;width:94px;height:25px;line-height:25px;text-align:center;color:#333"><span style="color:#267c26">名古屋鲸八</span></div><div class="t" style="left:257px;top:500px;width:91px;height:25px;line-height:25px;text-align:center;color:#333"><span style="color:#cf0a0a">2-1</span>(1-0)</div><div class="t" style="left:349px;top:500px;width:39px;height:25px;line-height:25px;text-align:center;color:#333">8-7</div><div class="t" style="left:389px;top:500px;width:113px;height:25px;line-height:25px;text-align:center;color:#333">熊本深红</div><div class="t" style="left:503px;top:500px;width:56px;height:25px;line-height:25px;text-align:center;color:#333">0.88</div><div class="t" style="left:560px;top:500px;width:69px;height:25px;line-height:25px;text-align:center;color:#333">平/半</div><div class="t" style="left:630px;top:500px;width:59px;height:25px;line-height:25px;text-align:center;color:#333">0.94</div><div class="t" style="left:690px;top:500px;width:56px;height:25px;line-height:25px;text-align:center;color:#333">1.92</div><div class="t" style="left:747px;top:500px;width:71px;height:25px;line-height:25px;text-align:center;color:#333">3.43</div><div class="t" style="left:819px;top:500px;width:73px;height:25px;line-height:25px;text-align:center;color:#333">3.70</div><div class="t" style="left:893px;top:500px;width:38px;height:25px;line-height:25px;text-align:center;color:#333"><span style="color:#cf0a0a">胜</span></div><div class="t" style="left:932px;top:500px;width:38px;height:25px;line-height:25px;text-align:center;color:#333"><span style="color:#cf0a0a">赢</span></div><div class="t" style="left:971px;top:500px;width:57px;height:25px;line-height:25px;text-align:center;color:#333"><span style="color:#cf0a0a">大</span></div><div style="left:3px;top:524px;width:80px;height:26px;background:#009900;"></div><div style="left:3px;top:524px;width:80px;height:1px;background:#b9cdb9;"></div><div class="t" style="left:3px;top:526px;width:80px;height:25px;line-height:25px;text-align:center;color:#fff">日职联</div><div class="t" style="left:84px;top:526px;width:77px;height:25px;line-height:25px;text-align:center;color:#333">25-07-05</div><div class="t" style="left:162px;top:526px;width:94px;height:25px;line-height:25px;text-align:center;color:#333"><span style="color:#267c26">名古屋鲸八</span></div><div class="t" style="left:257px;top:526px;width:91px;height:25px;line-height:25px;text-align:center;color:#333"><span style="color:#cf0a0a">0-0</span>(0-0)</div><div class="t" style="left:349px;top:526px;width:39px;height:25px;line-height:25px;text-align:center;color:#333">4-4</div><div class="t" style="left:389px;top:526px;width:113px;height:25px;line-height:25px;text-align:center;color:#333">东京绿茵</div><div class="t" style="left:503px;top:526px;width:56px;height:25px;line-height:25px;text-align:center;color:#333">1.03</div><div class="t" style="left:560px;top:526px;width:69px;height:25px;line-height:25px;text-align:center;color:#333">平/半</div><div class="t" style="left:630px;top:526px;width:59px;height:25px;line-height:25px;text-align:center;color:#333">0.86</div><div class="t" style="left:690px;top:526px;width:56px;height:25px;line-height:25px;text-align:center;color:#333">2.27</div><div class="t" style="left:747px;top:526px;width:71px;height:25px;line-height:25px;text-align:center;color:#333">2.90</div><div class="t" style="left:819px;top:526px;width:73px;height:25px;line-height:25px;text-align:center;color:#333">3.44</div><div class="t" style="left:893px;top:526px;width:38px;height:25px;line-height:25px;text-align:center;color:#333"><span style="color:#118811">平</span></div><div class="t" style="left:932px;top:526px;width:38px;height:25px;line-height:25px;text-align:center;color:#333"><span style="color:#1a1aa6">输</span></div><div class="t" style="left:971px;top:526px;width:57px;height:25px;line-height:25px;text-align:center;color:#333"><span style="color:#1a1aa6">小</span></div><div style="left:3px;top:550px;width:80px;height:26px;background:#009900;"></div><div style="left:3px;top:550px;width:80px;height:1px;background:#b9cdb9;"></div><div class="t" style="left:3px;top:552px;width:80px;height:25px;line-height:25px;text-align:center;color:#fff">日职联</div><div class="t" style="left:84px;top:552px;width:77px;height:25px;line-height:25px;text-align:center;color:#333">25-06-28</div><div class="t" style="left:162px;top:552px;width:94px;height:25px;line-height:25px;text-align:center;color:#333">广岛三箭</div><div class="t" style="left:257px;top:552px;width:91px;height:25px;line-height:25px;text-align:center;color:#333"><span style="color:#cf0a0a">1-2</span>(0-2)</div><div class="t" style="left:349px;top:552px;width:39px;height:25px;line-height:25px;text-align:center;color:#333">8-2</div><div class="t" style="left:389px;top:552px;width:113px;height:25px;line-height:25px;text-align:center;color:#333"><span style="color:#267c26">名古屋鲸八</span></div><div class="t" style="left:503px;top:552px;width:56px;height:25px;line-height:25px;text-align:center;color:#333">1.07</div><div class="t" style="left:560px;top:552px;width:69px;height:25px;line-height:25px;text-align:center;color:#333">半/一</div><div class="t" style="left:630px;top:552px;width:59px;height:25px;line-height:25px;text-align:center;color:#333">0.82</div><div class="t" style="left:690px;top:552px;width:56px;height:25px;line-height:25px;text-align:center;color:#333">1.79</div><div class="t" style="left:747px;top:552px;width:71px;height:25px;line-height:25px;text-align:center;color:#333">3.51</div><div class="t" style="left:819px;top:552px;width:73px;height:25px;line-height:25px;text-align:center;color:#333">4.27</div><div class="t" style="left:893px;top:552px;width:38px;height:25px;line-height:25px;text-align:center;color:#333"><span style="color:#cf0a0a">胜</span></div><div class="t" style="left:932px;top:552px;width:38px;height:25px;line-height:25px;text-align:center;color:#333"><span style="color:#cf0a0a">赢</span></div><div class="t" style="left:971px;top:552px;width:57px;height:25px;line-height:25px;text-align:center;color:#333"><span style="color:#cf0a0a">大</span></div><div style="left:3px;top:576px;width:80px;height:26px;background:#009900;"></div><div style="left:3px;top:576px;width:80px;height:1px;background:#b9cdb9;"></div><div class="t" style="left:3px;top:578px;width:80px;height:25px;line-height:25px;text-align:center;color:#fff">日职联</div><div class="t" style="left:84px;top:578px;width:77px;height:25px;line-height:25px;text-align:center;color:#333">25-06-21</div><div class="t" style="left:162px;top:578px;width:94px;height:25px;line-height:25px;text-align:center;color:#333"><span style="color:#267c26">名古屋鲸八</span></div><div class="t" style="left:257px;top:578px;width:91px;height:25px;line-height:25px;text-align:center;color:#333"><span style="color:#cf0a0a">1-1</span>(0-0)</div><div class="t" style="left:349px;top:578px;width:39px;height:25px;line-height:25px;text-align:center;color:#333">3-6</div><div class="t" style="left:389px;top:578px;width:113px;height:25px;line-height:25px;text-align:center;color:#333">清水鼓动</div><div class="t" style="left:503px;top:578px;width:56px;height:25px;line-height:25px;text-align:center;color:#333">1.13</div><div class="t" style="left:560px;top:578px;width:69px;height:25px;line-height:25px;text-align:center;color:#333">平/半</div><div class="t" style="left:630px;top:578px;width:59px;height:25px;line-height:25px;text-align:center;color:#333">0.77</div><div class="t" style="left:690px;top:578px;width:56px;height:25px;line-height:25px;text-align:center;color:#333">2.38</div><div class="t" style="left:747px;top:578px;width:71px;height:25px;line-height:25px;text-align:center;color:#333">3.16</div><div class="t" style="left:819px;top:578px;width:73px;height:25px;line-height:25px;text-align:center;color:#333">2.94</div><div class="t" style="left:893px;top:578px;width:38px;height:25px;line-height:25px;text-align:center;color:#333"><span style="color:#118811">平</span></div><div class="t" style="left:932px;top:578px;width:38px;height:25px;line-height:25px;text-align:center;color:#333"><span style="color:#1a1aa6">输</span></div><div class="t" style="left:971px;top:578px;width:57px;height:25px;line-height:25px;text-align:center;color:#333"><span style="color:#1a1aa6">小</span></div><div style="left:3px;top:602px;width:80px;height:26px;background:#009900;"></div><div style="left:3px;top:602px;width:80px;height:1px;background:#b9cdb9;"></div><div class="t" style="left:3px;top:604px;width:80px;height:25px;line-height:25px;text-align:center;color:#fff">日职联</div><div class="t" style="left:84px;top:604px;width:77px;height:25px;line-height:25px;text-align:center;color:#333">25-06-15</div><div class="t" style="left:162px;top:604px;width:94px;height:25px;line-height:25px;text-align:center;color:#333">神户胜利船</div><div class="t" style="left:257px;top:604px;width:91px;height:25px;line-height:25px;text-align:center;color:#333"><span style="color:#cf0a0a">2-1</span>(2-0)</div><div class="t" style="left:349px;top:604px;width:39px;height:25px;line-height:25px;text-align:center;color:#333">9-3</div><div class="t" style="left:389px;top:604px;width:113px;height:25px;line-height:25px;text-align:center;color:#333"><span style="color:#267c26">名古屋鲸八</span></div><div class="t" style="left:503px;top:604px;width:56px;height:25px;line-height:25px;text-align:center;color:#333">1.08</div><div class="t" style="left:560px;top:604px;width:69px;height:25px;line-height:25px;text-align:center;color:#333">半球</div><div class="t" style="left:630px;top:604px;width:59px;height:25px;line-height:25px;text-align:center;color:#333">0.81</div><div class="t" style="left:690px;top:604px;width:56px;height:25px;line-height:25px;text-align:center;color:#333">1.96</div><div class="t" style="left:747px;top:604px;width:71px;height:25px;line-height:25px;text-align:center;color:#333">3.15</div><div class="t" style="left:819px;top:604px;width:73px;height:25px;line-height:25px;text-align:center;color:#333">3.99</div><div class="t" style="left:893px;top:604px;width:38px;height:25px;line-height:25px;text-align:center;color:#333"><span style="color:#1a1aa6">负</span></div><div class="t" style="left:932px;top:604px;width:38px;height:25px;line-height:25px;text-align:center;color:#333"><span style="color:#1a1aa6">输</span></div><div class="t" style="left:971px;top:604px;width:57px;height:25px;line-height:25px;text-align:center;color:#333"><span style="color:#cf0a0a">大</span></div><div style="left:3px;top:628px;width:80px;height:26px;background:#003300;"></div><div style="left:3px;top:628px;width:80px;height:1px;background:#b9cdb9;"></div><div class="t" style="left:3px;top:630px;width:80px;height:25px;line-height:25px;text-align:center;color:#fff">日皇杯</div><div class="t" style="left:84px;top:630px;width:77px;height:25px;line-height:25px;text-align:center;color:#333">25-06-11</div><div class="t" style="left:162px;top:630px;width:94px;height:25px;line-height:25px;text-align:center;color:#333"><span style="color:#267c26">名古屋鲸八</span></div><div class="t" style="left:257px;top:630px;width:91px;height:25px;line-height:25px;text-align:center;color:#333"><span style="color:#cf0a0a">3-0</span>(0-0)</div><div class="t" style="left:349px;top:630px;width:39px;height:25px;line-height:25px;text-align:center;color:#333">10-1</div><div class="t" style="left:389px;top:630px;width:113px;height:25px;line-height:25px;text-align:center;color:#333">奥纳加钴矿石</div><div class="t" style="left:503px;top:630px;width:56px;height:25px;line-height:25px;text-align:center;color:#333">1.01</div><div class="t" style="left:560px;top:630px;width:69px;height:25px;line-height:25px;text-align:center;color:#333">三球</div><div class="t" style="left:630px;top:630px;width:59px;height:25px;line-height:25px;text-align:center;color:#333">0.81</div><div class="t" style="left:690px;top:630px;width:56px;height:25px;line-height:25px;text-align:center;color:#333">1.06</div><div class="t" style="left:747px;top:630px;width:71px;height:25px;line-height:25px;text-align:center;color:#333">10.79</div><div class="t" style="left:819px;top:630px;width:73px;height:25px;line-height:25px;text-align:center;color:#333">20.82</div><div class="t" style="left:893px;top:630px;width:38px;height:25px;line-height:25px;text-align:center;color:#333"><span style="color:#cf0a0a">胜</span></div><div class="t" style="left:932px;top:630px;width:38px;height:25px;line-height:25px;text-align:center;color:#333"><span style="color:#118811">走</span></div><div class="t" style="left:971px;top:630px;width:57px;height:25px;line-height:25px;text-align:center;color:#333"><span style="color:#1a1aa6">小</span></div><div style="left:3px;top:654px;width:80px;height:26px;background:#009900;"></div><div style="left:3px;top:654px;width:80px;height:1px;background:#b9cdb9;"></div><div class="t" style="left:3px;top:656px;width:80px;height:25px;line-height:25px;text-align:center;color:#fff">日职联</div><div class="t" style="left:84px;top:656px;width:77px;height:25px;line-height:25px;text-align:center;color:#333">25-05-31</div><div class="t" style="left:162px;top:656px;width:94px;height:25px;line-height:25px;text-align:center;color:#333"><span style="color:#267c26">名古屋鲸八</span></div><div class="t" style="left:257px;top:656px;width:91px;height:25px;line-height:25px;text-align:center;color:#333"><span style="color:#cf0a0a">3-0</span>(0-0)</div><div class="t" style="left:349px;top:656px;width:39px;height:25px;line-height:25px;text-align:center;color:#333">8-3</div><div class="t" style="left:389px;top:656px;width:113px;height:25px;line-height:25px;text-align:center;color:#333">新泻天鹅</div><div class="t" style="left:503px;top:656px;width:56px;height:25px;line-height:25px;text-align:center;color:#333">0.90</div><div class="t" style="left:560px;top:656px;width:69px;height:25px;line-height:25px;text-align:center;color:#333">平/半</div><div class="t" style="left:630px;top:656px;width:59px;height:25px;line-height:25px;text-align:center;color:#333">0.99</div><div class="t" style="left:690px;top:656px;width:56px;height:25px;line-height:25px;text-align:center;color:#333">2.10</div><div class="t" style="left:747px;top:656px;width:71px;height:25px;line-height:25px;text-align:center;color:#333">3.14</div><div class="t" style="left:819px;top:656px;width:73px;height:25px;line-height:25px;text-align:center;color:#333">3.55</div><div class="t" style="left:893px;top:656px;width:38px;height:25px;line-height:25px;text-align:center;color:#333"><span style="color:#cf0a0a">胜</span></div><div class="t" style="left:932px;top:656px;width:38px;height:25px;line-height:25px;text-align:center;color:#333"><span style="color:#cf0a0a">赢</span></div><div class="t" style="left:971px;top:656px;width:57px;height:25px;line-height:25px;text-align:center;color:#333"><span style="color:#cf0a0a">大</span></div><div style="left:3px;top:680px;width:80px;height:26px;background:#009900;"></div><div style="left:3px;top:680px;width:80px;height:1px;background:#b9cdb9;"></div><div class="t" style="left:3px;top:682px;width:80px;height:25px;line-height:25px;text-align:center;color:#fff">日职联</div><div class="t" style="left:84px;top:682px;width:77px;height:25px;line-height:25px;text-align:center;color:#333">25-05-24</div><div class="t" style="left:162px;top:682px;width:94px;height:25px;line-height:25px;text-align:center;color:#333"><span style="color:#267c26">名古屋鲸八</span></div><div class="t" style="left:257px;top:682px;width:91px;height:25px;line-height:25px;text-align:center;color:#333"><span style="color:#cf0a0a">2-1</span>(0-0)</div><div class="t" style="left:349px;top:682px;width:39px;height:25px;line-height:25px;text-align:center;color:#333">7-2</div><div class="t" style="left:389px;top:682px;width:113px;height:25px;line-height:25px;text-align:center;color:#333">浦和红钻</div><div class="t" style="left:503px;top:682px;width:56px;height:25px;line-height:25px;text-align:center;color:#333">1.01</div><div class="t" style="left:560px;top:682px;width:69px;height:25px;line-height:25px;text-align:center;color:#333">平/半</div><div class="t" style="left:630px;top:682px;width:59px;height:25px;line-height:25px;text-align:center;color:#333">0.88</div><div class="t" style="left:690px;top:682px;width:56px;height:25px;line-height:25px;text-align:center;color:#333">2.41</div><div class="t" style="left:747px;top:682px;width:71px;height:25px;line-height:25px;text-align:center;color:#333">2.98</div><div class="t" style="left:819px;top:682px;width:73px;height:25px;line-height:25px;text-align:center;color:#333">3.08</div><div class="t" style="left:893px;top:682px;width:38px;height:25px;line-height:25px;text-align:center;color:#333"><span style="color:#cf0a0a">胜</span></div><div class="t" style="left:932px;top:682px;width:38px;height:25px;line-height:25px;text-align:center;color:#333"><span style="color:#cf0a0a">赢</span></div><div class="t" style="left:971px;top:682px;width:57px;height:25px;line-height:25px;text-align:center;color:#333"><span style="color:#cf0a0a">大</span></div><div class="t" style="left:2px;top:708px;width:1028px;height:25px;line-height:25px;text-align:center;color:#333;letter-spacing:0.18px">近<span style="color:#cf0a0a">10</span>场,胜5平2负3, 胜率:<span style="color:#cf0a0a">50%</span> 让胜率:<span style="color:#cf0a0a">40%</span> 大率:<span style="color:#cf0a0a">70%</span> 单率:<span style="color:#cf0a0a">80%</span></div>
</body></html>
